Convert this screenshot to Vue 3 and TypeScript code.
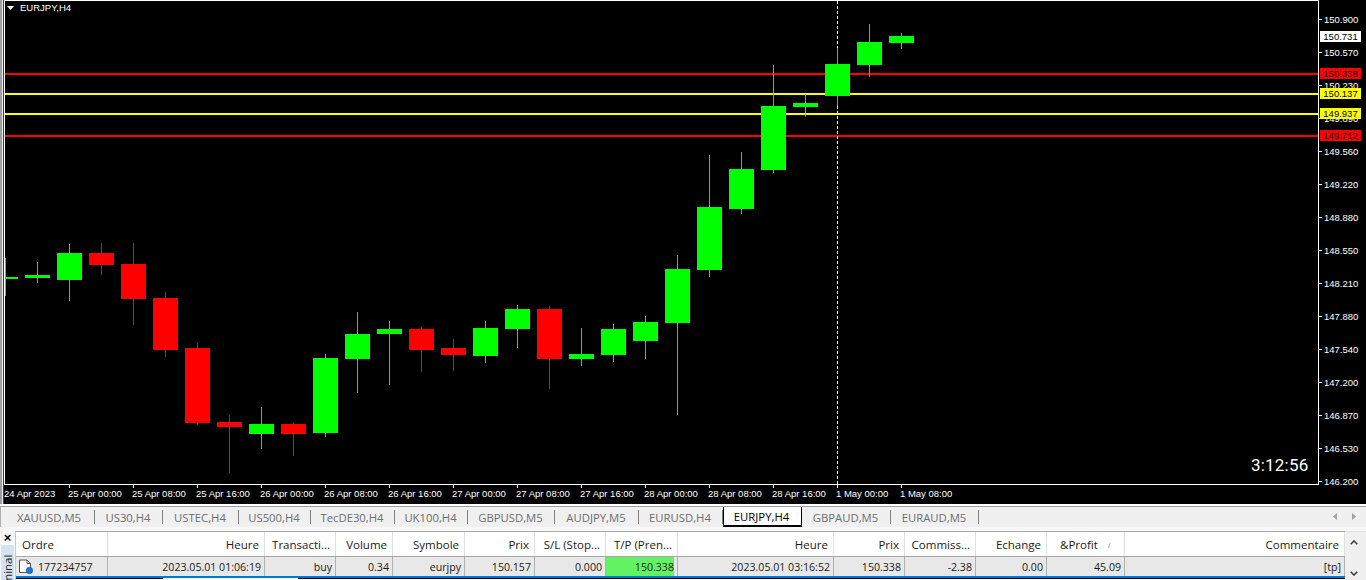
<script setup lang="ts">
type Candle = [number, number, number, number, number]
// up(1)/down(0), wick top, wick bottom, body top, body bottom
const raw: Candle[] = [
  [1,258,296,277,279],[1,262,283,275,278],[1,244,301,253,280],[0,243,275,253,265],
  [0,243,325,264,299],[0,292,357,298,350],[0,343,425,348,423],[0,415,473,422,427],
  [1,407,449,424,434],[0,423,456,424,434],[1,354,437,358,433],[1,312,393,334,359],
  [1,321,385,329,334],[0,327,372,329,350],[0,339,371,348,355],[1,321,363,328,356],
  [1,305,348,309,329],[0,306,389,309,359],[1,328,366,354,359],[1,324,362,329,355],
  [1,316,359,322,341],[1,255,415,269,323],[1,155,277,207,270],[1,152,214,169,209],
  [1,65,173,106,170],[1,94,117,103,107],[1,48,106,64,96],[1,24,77,42,65],[1,33,49,36,43],
]
const candles = raw.map((c, i) => {
  const cx = 5 + i * 32
  const left = Math.max(5, cx - 12)
  return {
    color: c[0] ? '#00ff00' : '#ff0000',
    wx: cx, wy: c[1], wh: c[2] - c[1],
    bx: left, by: c[3], bw: cx + 13 - left, bh: c[4] - c[3],
  }
})
const prices: [string, number][] = [
  ['150.900',19],['150.570',52],['150.230',85],['149.890',118],['149.560',151],
  ['149.220',184],['148.880',217],['148.550',250],['148.210',283],['147.880',316],
  ['147.540',349],['147.200',382],['146.870',415],['146.530',448],['146.200',481],
]
const times = ['24 Apr 2023','25 Apr 00:00','25 Apr 08:00','25 Apr 16:00','26 Apr 00:00','26 Apr 08:00','26 Apr 16:00','27 Apr 00:00','27 Apr 08:00','27 Apr 16:00','28 Apr 00:00','28 Apr 08:00','28 Apr 16:00','1 May 00:00','1 May 08:00']
const hlines = [
  { y: 73, c: '#ff0000', label: '150.338', ly: 68 },
  { y: 93, c: '#ffff00', label: '150.137', ly: 88 },
  { y: 113, c: '#ffff00', label: '149.937', ly: 108 },
  { y: 135, c: '#ff0000', label: '149.712', ly: 130 },
]
const tabs = [
  ['XAUUSD,M5',90],['US30,H4',68],['USTEC,H4',76],['US500,H4',72],['TecDE30,H4',84],['UK100,H4',73],
  ['GBPUSD,M5',87],['AUDJPY,M5',84],['EURUSD,H4',84],['EURJPY,H4',79],['GBPAUD,M5',89],['EURAUD,M5',88],
] as [string, number][]
const activeTab = 'EURJPY,H4'
const cols = [
  { w: 92, h: 'Ordre', v: '177234757', cls: 'first' },
  { w: 157, h: 'Heure', v: '2023.05.01 01:06:19' },
  { w: 71, h: 'Transacti...', v: 'buy' },
  { w: 57, h: 'Volume', v: '0.34' },
  { w: 72, h: 'Symbole', v: 'eurjpy' },
  { w: 70, h: 'Prix', v: '150.157' },
  { w: 71, h: 'S/L (Stop...', v: '0.000' },
  { w: 72, h: 'T/P (Pren...', v: '150.338', cls: 'tp' },
  { w: 156, h: 'Heure', v: '2023.05.01 03:16:52' },
  { w: 71, h: 'Prix', v: '150.338' },
  { w: 71, h: 'Commiss...', v: '-2.38' },
  { w: 71, h: 'Echange', v: '0.00' },
  { w: 78, h: '&Profit', v: '45.09', cls: 'profit' },
  { w: 220, h: 'Commentaire', v: '[tp]' },
]
const gridCols = cols.map(c => c.w + 'px').join(' ')
</script>

<template>
  <div class="app">
    <svg class="chart" width="1366" height="504" viewBox="0 0 1366 504">
      <rect x="0" y="0" width="1366" height="504" fill="#000" />
      <rect x="0" y="0" width="2" height="504" fill="#a0a0a0" />
      <rect x="2" y="0" width="1" height="504" fill="#e8e8e8" />
      <rect x="3" y="0" width="1" height="504" fill="#404040" />
      <rect x="4" y="0" width="1" height="485" fill="#fff" />
      <rect x="4" y="0" width="1315" height="1" fill="#fff" />
      <rect x="1318" y="0" width="1" height="485" fill="#fff" />
      <rect x="4" y="484" width="1315" height="1" fill="#fff" />

      <rect v-for="l in hlines" :key="l.y" x="5" :y="l.y" width="1313" height="2" :fill="l.c" shape-rendering="crispEdges" />
      <line x1="837.5" y1="1" x2="837.5" y2="484" stroke="#fff" stroke-width="1" stroke-dasharray="3 2" shape-rendering="crispEdges" />

      <g v-for="(c, i) in candles" :key="i" shape-rendering="crispEdges">
        <rect :x="c.wx" :y="c.wy" width="1" :height="c.wh" :fill="c.color" />
        <rect :x="c.bx" :y="c.by" :width="c.bw" :height="c.bh" :fill="c.color" />
      </g>

      <path d="M7 6h7l-3.500 4z" fill="#fff" />
      <text x="20" y="11" class="lbl">EURJPY,H4</text>

      <g v-for="p in prices" :key="p[0]">
        <rect x="1319" :y="p[1]" width="3" height="1" fill="#fff" />
        <text x="1324" :y="p[1] + 4" class="lbl">{{ p[0] }}</text>
      </g>

      <rect x="1320" y="31" width="41" height="11" fill="#fff" />
      <text x="1340.500" y="40" class="lbl mark">150.731</text>
      <g v-for="l in hlines" :key="l.label">
        <rect x="1320" :y="l.ly" width="41" height="11" :fill="l.c" />
        <text x="1340.500" :y="l.ly + 9" class="lbl mark">{{ l.label }}</text>
      </g>

      <g v-for="(t, i) in times" :key="t">
        <rect v-if="i > 0" :x="5 + i * 64" y="485" width="1" height="3" fill="#fff" />
        <text :x="4 + i * 64" y="497" class="lbl">{{ t }}</text>
      </g>

      <text x="1251" y="471" class="timer">3:12:56</text>
    </svg>

    <div class="rule"></div>

    <div class="tabbar">
      <div
        v-for="t in tabs"
        :key="t[0]"
        class="tab"
        :class="{ active: t[0] === activeTab }"
        :style="{ width: t[1] + 'px' }"
      >{{ t[0] }}</div>
      <div class="tabnav">
        <svg width="4" height="7" viewBox="0 0 4 7"><path d="M4 0v7L0 3.500z" fill="#a0a0a0" /></svg>
        <svg width="4" height="7" viewBox="0 0 4 7"><path d="M0 0v7l4-3.500z" fill="#a0a0a0" /></svg>
      </div>
    </div>

    <div class="panel">
      <div class="side">
        <div class="close">×</div>
        <div class="vtab"><span>Terminal</span></div>
      </div>
      <div class="table">
        <div class="grid head" :style="{ gridTemplateColumns: gridCols }">
          <div v-for="(c, i) in cols" :key="i" class="hcell" :class="c.cls">
            <span>{{ c.h }}</span>
            <i v-if="c.cls === 'profit'" class="sort">/</i>
          </div>
        </div>
        <div class="grid row" :style="{ gridTemplateColumns: gridCols }">
          <div v-for="(c, i) in cols" :key="i" class="cell" :class="c.cls">
            <svg v-if="c.cls === 'first'" class="doc" width="15" height="15" viewBox="0 0 15 15">
              <path d="M.5 1h7.500l3.500 3.500V13.500H.5z" fill="#fff" stroke="#555" />
              <path d="M8 1v3.500h3.500" fill="none" stroke="#555" />
              <circle cx="10.500" cy="11.500" r="3.200" fill="#1878d8" stroke="#0a4f9a" stroke-width=".6" />
            </svg>
            <span>{{ c.v }}</span>
          </div>
        </div>
        <div class="blue"></div>
        <div class="last"></div>
      </div>
      <div class="scroll">
        <svg width="8" height="5" viewBox="0 0 8 5"><path d="M.7 4.300L4 1l3.300 3.300" fill="none" stroke="#404040" stroke-width="1.600" /></svg>
        <svg width="8" height="5" viewBox="0 0 8 5"><path d="M.7.700L4 4 7.300.700" fill="none" stroke="#404040" stroke-width="1.600" /></svg>
      </div>
    </div>
  </div>
</template>

<style>
html, body { margin: 0; overflow: hidden; background: #f0f0f0; }
</style>

<style scoped>
.app {
  width: 1366px;
  height: 580px;
  overflow: hidden;
  display: flex;
  flex-direction: column;
  font-family: "Open Sans", "Liberation Sans", sans-serif;
  font-size: 11px;
  color: #1a1a1a;
  background: #f0f0f0;
}
.chart { display: block; flex: none; }
.lbl {
  font-family: "Liberation Sans", sans-serif;
  font-size: 9.500px;
  fill: #fff;
}
.mark { fill: #000; text-anchor: middle; }
.timer {
  font-family: "Roboto", sans-serif;
  font-size: 17px;
  letter-spacing: .2px;
  fill: #fff;
}
.rule {
  flex: none;
  height: 2px;
  background: #fff;
  border-bottom: 1px solid #a0a0a0;
}
.tabbar {
  flex: none;
  height: 20px;
  display: flex;
  align-items: stretch;
  padding-left: 4px;
  border-left: 1px solid #b0b0b0;
  background: #f0f0f0;
}
.tab {
  flex: none;
  box-sizing: border-box;
  display: flex;
  align-items: center;
  justify-content: center;
  padding-right: 2px;
  font-size: 11.300px;
  color: #6e6e6e;
  position: relative;
}
.tab::after {
  content: "";
  position: absolute;
  right: 0;
  top: 3px;
  bottom: 3px;
  width: 1px;
  background: #808080;
}
.tab.active {
  color: #000;
  background: #fff;
  border: 1px solid #000;
  border-top: 0;
  border-bottom-width: 2px;
}
.tab.active::after { display: none; }
.tabnav {
  margin-left: auto;
  display: flex;
  align-items: center;
  gap: 15px;
  padding: 0 10px 2px 0;
}
.panel {
  flex: none;
  height: 53px;
  display: flex;
  margin-top: 0;
  background: #f8f8f8;
  padding-top: 4px;
  box-sizing: content-box;
}
.side {
  flex: none;
  width: 15px;
  display: flex;
  flex-direction: column;
  overflow: hidden;
}
.close {
  height: 13px;
  flex: none;
  line-height: 13px;
  text-align: center;
  font-family: "Liberation Sans", sans-serif;
  font-weight: 700;
  font-size: 13px;
  color: #000;
}
.vtab {
  margin: 1px 1px 0;
  flex: 1;
  background: #d4e3f1;
  display: flex;
  justify-content: center;
  padding-top: 7px;
  overflow: hidden;
}
.vtab span {
  writing-mode: vertical-rl;
  transform: rotate(180deg);
  font-size: 11.500px;
  height: 50px;
  line-height: 13px;
  color: #222;
  white-space: nowrap;
  text-align: left;
}
.table {
  flex: none;
  width: 1330px;
  border-top: 1px solid #a8a8a8;
  border-left: 1px solid #c8c8c8;
  box-sizing: border-box;
  display: flex;
  flex-direction: column;
  background: #fff;
}
.grid { display: grid; flex: none; }
.head { height: 24px; background: #fff; border-bottom: 1px solid #a8a8a8; }
.hcell {
  display: flex;
  align-items: center;
  justify-content: flex-end;
  padding-right: 5px;
  border-right: 1px solid #e0e0e0;
  white-space: nowrap;
  font-size: 11.500px;
  min-width: 0;
  box-sizing: border-box;
}
.hcell.first { justify-content: flex-start; padding-left: 6px; }
.hcell.profit { justify-content: flex-start; padding-left: 13px; gap: 10px; }
.sort { font-size: 8px; color: #888; font-style: normal; }
.row { height: 19px; background: #e8e8e8; }
.cell {
  display: flex;
  align-items: center;
  justify-content: flex-end;
  padding-right: 3px;
  border-right: 1px solid #b0b0b0;
  white-space: nowrap;
  font-size: 10.600px;
  box-sizing: border-box;
  min-width: 0;
}
.cell.first { justify-content: flex-start; padding-left: 3px; gap: 4px; }
.cell.tp { background: linear-gradient(90deg, #62f262 68px, #e8e8e8 68px); }
.doc { flex: none; }
.blue { flex: none; height: 2px; background: #0078d7; }
.last { flex: none; height: 1px; background: linear-gradient(90deg, #000 147px, #fff 147px, #fff 282px, #000 282px); }
.scroll {
  flex: 1;
  display: flex;
  flex-direction: column;
  align-items: center;
  justify-content: space-between;
  padding: 8px 4px 8px 0;
  background: #f0f0f0;
  border-top: 1px solid #e0e0e0;
  box-sizing: border-box;
}
</style>
